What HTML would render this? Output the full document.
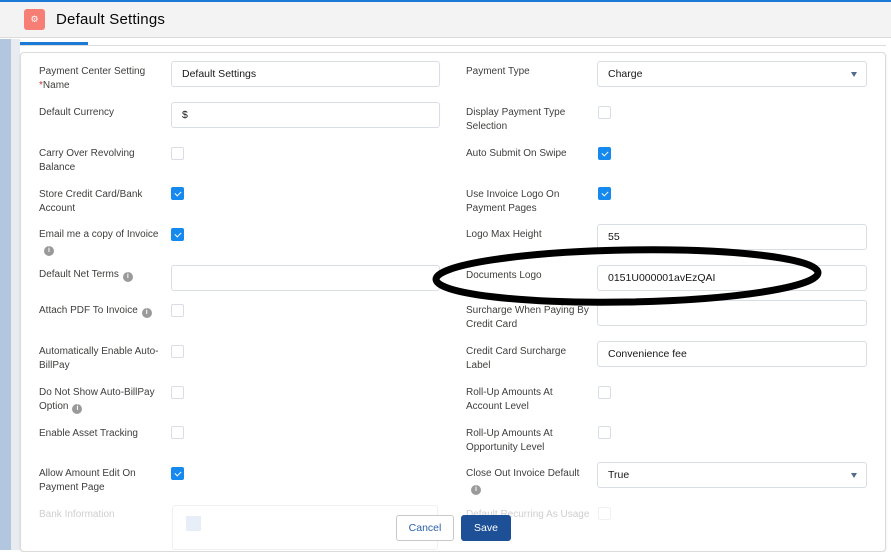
<!DOCTYPE html>
<html><head><meta charset="utf-8"><style>
*{box-sizing:border-box;margin:0;padding:0}
body{width:891px;height:550px;overflow:hidden;background:#fff;font-family:"Liberation Sans",sans-serif;position:relative}
.a{position:absolute}
.lbl{position:absolute;font-size:10px;line-height:14px;color:#3e3e3c;margin-top:1px}
.inp{position:absolute;height:26px;border:1px solid #d8dde6;border-radius:3px;background:#fff;font-size:10.5px;color:#181818;padding-left:10px;line-height:24px}
.cb{position:absolute;width:13px;height:13px;border:1px solid #d8dde6;border-radius:2px;background:#fff}
.cb.on{background:#1589ee;border-color:#1589ee}
.cb.on::after{content:"";position:absolute;left:4px;top:2px;width:3px;height:5px;border:solid #fff;border-width:0 1.3px 1.3px 0;transform:rotate(45deg)}
.info{display:inline-block;width:10px;height:10px;border-radius:50%;background:#9a9a9a;color:#fff;font-size:7px;line-height:10px;text-align:center;font-weight:bold;vertical-align:-1px;margin-left:4px}
.arr{position:absolute;right:9px;top:10px;width:0;height:0;border-left:3.5px solid transparent;border-right:3.5px solid transparent;border-top:5px solid #54698d}
</style></head><body>
<div class="a" style="left:0;top:0;width:891px;height:2px;background:#1b7ad6"></div>
<div class="a" style="left:0;top:2px;width:891px;height:36px;background:#f3f3f3;border-bottom:1px solid #dcdcdc"></div>
<div class="a" style="left:24px;top:9px;width:21px;height:21px;background:#f77e75;border-radius:3px;color:#fff;font-size:9px;line-height:21px;text-align:center">⚙</div>
<div class="a" style="left:56px;top:10px;font-size:15px;color:#080707;line-height:19px;letter-spacing:.2px">Default Settings</div>
<div class="a" style="left:0;top:39px;width:19px;height:511px;background:#b3c6e0"></div>
<div class="a" style="left:11px;top:39px;width:9px;height:511px;background:#e8ecf1"></div>
<div class="a" style="left:20px;top:42px;width:68px;height:3px;background:#1b7ad6"></div>
<div class="a" style="left:20px;top:45px;width:866px;height:1px;background:#dcdcdc"></div>
<div class="a" style="left:20px;top:52px;width:866px;height:500px;border:1px solid #dddbda;border-radius:4px;background:#fff;box-shadow:0 1px 2px rgba(0,0,0,.1)"></div>

<div class="lbl" style="left:39px;top:64px">Payment Center Setting<br><span style="color:#c23934">*</span>Name</div>
<div class="inp" style="left:171px;top:61px;width:269px">Default Settings</div>
<div class="lbl" style="left:39px;top:105px">Default Currency</div>
<div class="inp" style="left:171px;top:102px;width:269px">$</div>
<div class="lbl" style="left:39px;top:146px">Carry Over Revolving<br>Balance</div>
<div class="cb" style="left:171px;top:147px"></div>
<div class="lbl" style="left:39px;top:187px">Store Credit Card/Bank<br>Account</div>
<div class="cb on" style="left:171px;top:187px"></div>
<div class="lbl" style="left:39px;top:227px">Email me a copy of Invoice<br><span class="info" style="margin-left:5px">i</span></div>
<div class="cb on" style="left:171px;top:228px"></div>
<div class="lbl" style="left:39px;top:267px">Default Net Terms<span class="info">i</span></div>
<div class="inp" style="left:171px;top:265px;width:269px"></div>
<div class="lbl" style="left:39px;top:303px">Attach PDF To Invoice<span class="info">i</span></div>
<div class="cb" style="left:171px;top:304px"></div>
<div class="lbl" style="left:39px;top:344px">Automatically Enable Auto-<br>BillPay</div>
<div class="cb" style="left:171px;top:345px"></div>
<div class="lbl" style="left:39px;top:385px">Do Not Show Auto-BillPay<br>Option<span class="info">i</span></div>
<div class="cb" style="left:171px;top:386px"></div>
<div class="lbl" style="left:39px;top:426px">Enable Asset Tracking</div>
<div class="cb" style="left:171px;top:426px"></div>
<div class="lbl" style="left:39px;top:466px">Allow Amount Edit On<br>Payment Page</div>
<div class="cb on" style="left:171px;top:467px"></div>
<div class="lbl" style="left:39px;top:507px;opacity:.25">Bank Information</div>
<div class="a" style="left:172px;top:505px;width:266px;height:45px;border:1px solid #f0f0f0;border-radius:3px"></div>
<div class="a" style="left:186px;top:516px;width:15px;height:15px;background:#e8eef8"></div>

<div class="lbl" style="left:466px;top:64px">Payment Type</div>
<div class="inp" style="left:597px;top:61px;width:270px">Charge<span class="arr"></span></div>
<div class="lbl" style="left:466px;top:105px">Display Payment Type<br>Selection</div>
<div class="cb" style="left:598px;top:106px"></div>
<div class="lbl" style="left:466px;top:146px">Auto Submit On Swipe</div>
<div class="cb on" style="left:598px;top:147px"></div>
<div class="lbl" style="left:466px;top:187px">Use Invoice Logo On<br>Payment Pages</div>
<div class="cb on" style="left:598px;top:187px"></div>
<div class="lbl" style="left:466px;top:227px">Logo Max Height</div>
<div class="inp" style="left:597px;top:224px;width:270px">55</div>
<div class="lbl" style="left:466px;top:268px">Documents Logo</div>
<div class="inp" style="left:597px;top:265px;width:270px">0151U000001avEzQAI</div>
<div class="lbl" style="left:466px;top:303px">Surcharge When Paying By<br>Credit Card</div>
<div class="inp" style="left:597px;top:300px;width:270px"></div>
<div class="lbl" style="left:466px;top:344px">Credit Card Surcharge<br>Label</div>
<div class="inp" style="left:597px;top:341px;width:270px">Convenience fee</div>
<div class="lbl" style="left:466px;top:385px">Roll-Up Amounts At<br>Account Level</div>
<div class="cb" style="left:598px;top:386px"></div>
<div class="lbl" style="left:466px;top:426px">Roll-Up Amounts At<br>Opportunity Level</div>
<div class="cb" style="left:598px;top:426px"></div>
<div class="lbl" style="left:466px;top:466px">Close Out Invoice Default<br><span class="info" style="margin-left:5px">i</span></div>
<div class="inp" style="left:597px;top:462px;width:270px">True<span class="arr"></span></div>
<div class="lbl" style="left:466px;top:507px;opacity:.25">Default Recurring As Usage</div>
<div class="cb" style="left:598px;top:507px;opacity:.4"></div>

<svg class="a" style="left:0;top:0" width="891" height="550"><ellipse cx="627" cy="276" rx="191" ry="26" fill="none" stroke="#000" stroke-width="7" transform="rotate(-1 627 276)"/></svg>

<div class="a" style="left:396px;top:515px;width:58px;height:26px;border:1px solid #c9c9c9;border-radius:3px;background:#fff;color:#2b62a8;font-size:10.5px;line-height:24px;text-align:center">Cancel</div>
<div class="a" style="left:461px;top:515px;width:50px;height:26px;border-radius:3px;background:#1d5096;color:#fff;font-size:10.5px;line-height:26px;text-align:center">Save</div>
</body></html>
